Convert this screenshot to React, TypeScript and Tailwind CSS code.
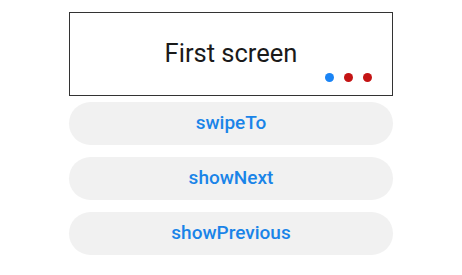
import React from 'react';

const actions = ['swipeTo', 'showNext', 'showPrevious'];

export default function App() {
  return (
    <div className="w-[462px] h-[275px] bg-white flex flex-col items-center pt-[12px]" style={{ fontFamily: 'Roboto, "Noto Sans", sans-serif' }}>
      <div className="relative w-[324px] h-[84px] border border-[#333333] flex items-center justify-center">
        <span className="text-[25.5px] text-[#1a1a1a] leading-none">First screen</span>
        <div className="absolute right-[20px] bottom-[13px] flex gap-[10px]">
          <span className="w-[9px] h-[9px] rounded-full bg-[#1a84f5]" />
          <span className="w-[9px] h-[9px] rounded-full bg-[#c41414]" />
          <span className="w-[9px] h-[9px] rounded-full bg-[#c41414]" />
        </div>
      </div>
      <div className="flex flex-col gap-[12px] mt-[6px]">
        {actions.map((a) => (
          <button key={a} className="w-[324px] h-[43px] rounded-full bg-[#f1f1f1] text-[#1a84e8] text-[19px] font-medium">
            {a}
          </button>
        ))}
      </div>
    </div>
  );
}
